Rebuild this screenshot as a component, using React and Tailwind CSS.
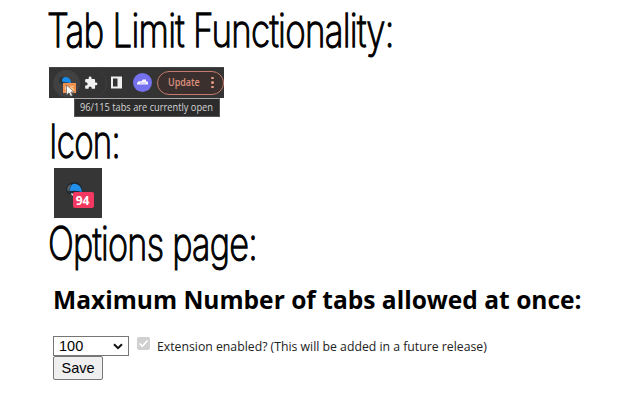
import React from 'react';

function Title({ children, className }) {
  return (
    <h2 className={`w-max origin-left whitespace-nowrap font-['Inter',sans-serif] text-[46px] font-extralight leading-[58px] tracking-[-1px] text-black [-webkit-text-stroke:1.3px_black] [stroke-linejoin:round] ${className}`}>
      {children}
    </h2>
  );
}

function Toolbar() {
  return (
    <div className="flex h-[31px] w-[175px] items-center bg-[#343434] border-t border-[#454545]">
      <div className="relative ml-1 flex h-[27px] w-[54px] items-center rounded-r-full border-r border-[#404040]">
        <div className="h-[27px] w-[27px] rounded-full bg-[#414141]" />
        <svg className="absolute left-[4px] top-[4px]" width="26" height="24" viewBox="0 0 26 24">
          <path d="M2 7 Q3 2 8 3 L12 9 L4 10Z" fill="#26333c" />
          <path d="M5 7 Q5 3 9 3 Q14 4 14 9 L6 8Z" fill="#168bea" />
          <rect x="6" y="9" width="13" height="10" fill="#ef9250" />
          <text x="8" y="18" fontFamily="Open Sans, sans-serif" fontSize="8" fontWeight="700" fill="#ffd2a5">96</text>
          <path d="M9.5 11v10l2.500-2.300 1.700 3.600 1.800-.8-1.700-3.500h3.300Z" fill="white" stroke="#4a4a4a" strokeWidth="0.6" />
        </svg>
        <svg className="absolute left-[31px] top-[6px]" width="14" height="14" viewBox="0 0 24 24" fill="#f2f2f2">
          <path d="M20.5 11H19V7a2 2 0 0 0-2-2h-4V3.500a2.500 2.500 0 0 0-5 0V5H4a2 2 0 0 0-2 2v3.800h1.500a2.700 2.700 0 0 1 0 5.400H2V20a2 2 0 0 0 2 2h3.800v-1.500a2.700 2.700 0 0 1 5.400 0V22H17a2 2 0 0 0 2-2v-4h1.500a2.500 2.500 0 0 0 0-5Z" />
        </svg>
      </div>
      <svg className="-mt-[2px] ml-[3px] shrink-0" width="13" height="13" viewBox="0 0 13 13">
        <path d="M1 0.500h11v12h-11ZM3 2.500v8h4.500v-8Z" fill="#f0f0f0" fillRule="evenodd" />
      </svg>
      <div className="-mt-[2px] ml-[10px] flex h-[19px] w-[19px] shrink-0 items-center justify-center rounded-full bg-[#7470ee]">
        <svg width="13" height="8" viewBox="0 0 13 8">
          <path d="M1 5 3 3 5 3.500 7 1.500h3v1.500l2 1v2.500H1Z" fill="#f5f4ff" />
          <path d="M4 5h6" stroke="#a8a4f0" strokeWidth="0.7" />
        </svg>
      </div>
      <div className="-mt-[1px] ml-[5px] flex h-[24px] w-[67px] shrink-0 items-center rounded-full border border-[#c47b6b] bg-[#3b302e] pl-[10px] font-['Open_Sans',sans-serif] text-[11.500px] font-semibold text-[#df917e]">
        <span className="-mt-[2px] inline-block w-[34px] origin-left scale-x-[0.78]">Update</span>
        <div className="ml-[9px] flex flex-col gap-[2px]">
          <i className="h-[2.500px] w-[2.500px] rounded-full bg-[#e39a86]" />
          <i className="h-[2.500px] w-[2.500px] rounded-full bg-[#e39a86]" />
          <i className="h-[2.500px] w-[2.500px] rounded-full bg-[#e39a86]" />
        </div>
      </div>
    </div>
  );
}

export default function App() {
  return (
    <main className="h-[400px] w-[640px] overflow-hidden bg-white pl-[49px] text-black">
      <div className="h-[67px] pt-[1px]">
        <Title className="-ml-[2px] scale-x-[0.76]">Tab Limit Functionality:</Title>
      </div>
      <Toolbar />
      <div className="ml-[25px] flex h-[19px] w-[146px] items-center border border-[#555] border-t-[#aaa] bg-[#2c2c2c] pl-[5px] font-['Open_Sans',sans-serif] text-[10px] text-[#d5d5d5]">
        <span className="origin-left scale-x-[0.925] whitespace-nowrap">96/115 tabs are currently open</span>
      </div>
      <div className="flow-root h-[51px]">
        <Title className="-mt-[5px] scale-x-[0.72]">Icon:</Title>
      </div>
      <div className="relative ml-[5px] h-[50px] w-[48px] bg-[#363636]">
        <svg width="48" height="50" viewBox="0 0 48 50">
          <path d="M12 22 Q12 15 20 14 Q28 14 29 25 L18 27 L13 25Z" fill="#1d2932" />
          <path d="M13 22 14 18 17 16 15 24 18 26Z" fill="#566169" />
          <path d="M16 21 Q17 15 22 16 Q27 17 28 24 Q22 22 16 23Z" fill="#2190ed" />
          <path d="M17 25 20 26 18 28Z" fill="#ddd" />
        </svg>
        <div className="absolute left-[19px] top-[24px] flex h-4 w-[21px] items-center justify-center rounded-[2px] bg-[#f23860] pt-[2px] pr-[2px] font-['Open_Sans',sans-serif] text-[12px] font-bold leading-none text-white">94</div>
      </div>
      <div className="flow-root h-[73px]">
        <Title className="-mt-[4px] -ml-[1px] scale-x-[0.745]">Options page:</Title>
      </div>
      <h1 className="ml-1 h-[45px] w-max origin-left scale-x-[0.982] whitespace-nowrap font-['Open_Sans',sans-serif] text-[25px] font-bold leading-[17px]">Maximum Number of tabs allowed at once:</h1>
      <div className="ml-1 flex h-5 items-start">
        <div className="flex h-5 w-[76px] items-center justify-between border border-[#767676] bg-white pl-[5px] pr-[5px] font-['Liberation_Sans',sans-serif] text-[14.500px] leading-none">
          <span>100</span>
          <svg width="10" height="7" viewBox="0 0 10 7"><path d="M1 1.200 5 5.200 9 1.200" fill="none" stroke="#111" strokeWidth="2" /></svg>
        </div>
        <div className="ml-2 mt-[1px] flex h-[13px] w-[13px] items-center justify-center rounded-[2px] bg-[#d0d0d0]">
          <svg width="11" height="11" viewBox="0 0 11 11"><path d="M1.500 5.500 4.300 8.200 9.500 2.500" fill="none" stroke="white" strokeWidth="1.700" /></svg>
        </div>
        <span className="ml-[7px] mt-px w-max origin-left scale-x-[0.98] whitespace-nowrap font-['Open_Sans',sans-serif] text-[12.500px] leading-5 text-[#222]">Extension enabled? (This will be added in a future release)</span>
      </div>
      <button className="ml-1 block h-[24px] w-[50px] rounded-[2px] border border-[#767676] bg-[#efefef] font-['Liberation_Sans',sans-serif] text-[14.500px] leading-none">Save</button>
    </main>
  );
}
